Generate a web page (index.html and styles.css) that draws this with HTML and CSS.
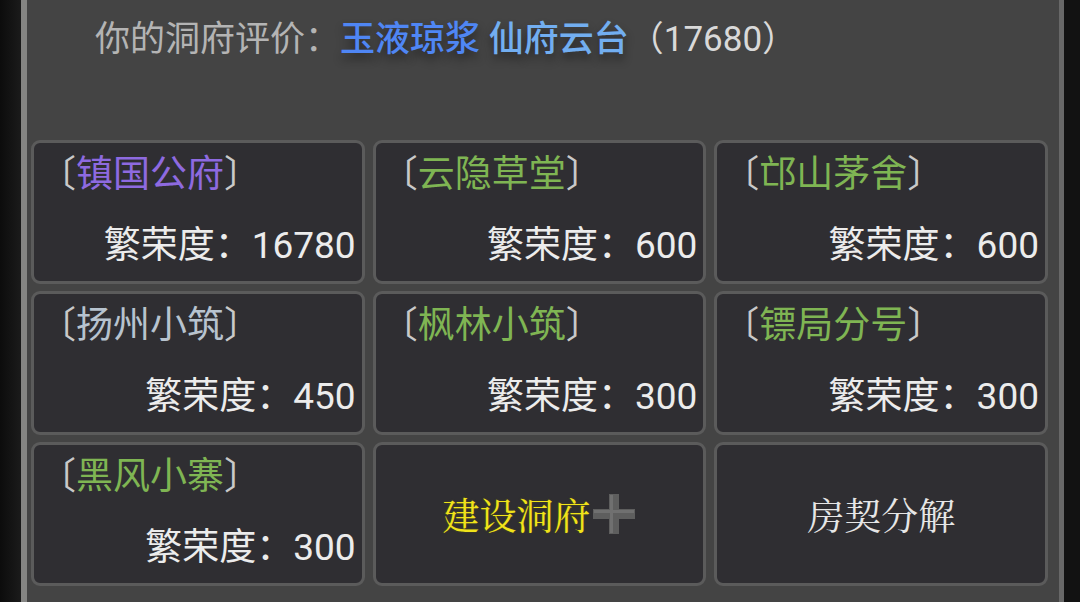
FILE: index.html
```html
<!DOCTYPE html>
<html lang="zh-CN">
<head>
<meta charset="utf-8">
<title>洞府</title>
<link rel="stylesheet" href="styles.css">
</head>
<body>
<div class="screen">
  <div class="panel">
    <div class="header">
      <span class="label">你的洞府评价：</span><span class="rank rank-a">玉液琼浆</span> <span class="rank rank-b">仙府云台</span><span class="score">（17680）</span>
    </div>
    <div class="grid">
      <div class="card">
        <div class="title"><span class="br">〔</span><span class="name purple">镇国公府</span><span class="br">〕</span></div>
        <div class="value">繁荣度：16780</div>
      </div>
      <div class="card">
        <div class="title"><span class="br">〔</span><span class="name green">云隐草堂</span><span class="br">〕</span></div>
        <div class="value">繁荣度：600</div>
      </div>
      <div class="card">
        <div class="title"><span class="br">〔</span><span class="name green">邙山茅舍</span><span class="br">〕</span></div>
        <div class="value">繁荣度：600</div>
      </div>
      <div class="card">
        <div class="title"><span class="br">〔</span><span class="name pale">扬州小筑</span><span class="br">〕</span></div>
        <div class="value">繁荣度：450</div>
      </div>
      <div class="card">
        <div class="title"><span class="br">〔</span><span class="name green">枫林小筑</span><span class="br">〕</span></div>
        <div class="value">繁荣度：300</div>
      </div>
      <div class="card">
        <div class="title"><span class="br">〔</span><span class="name green">镖局分号</span><span class="br">〕</span></div>
        <div class="value">繁荣度：300</div>
      </div>
      <div class="card">
        <div class="title"><span class="br">〔</span><span class="name green">黑风小寨</span><span class="br">〕</span></div>
        <div class="value">繁荣度：300</div>
      </div>
      <div class="card action">
        <span class="build">建设洞府</span><svg class="plus" width="44" height="40" viewBox="0 0 44 40"><rect x="1" y="15" width="42" height="10" fill="#5e5e5e"/><rect x="17" y="0" width="10" height="40" fill="#5e5e5e"/><rect x="2" y="16" width="40" height="3" fill="#707070"/><rect x="18" y="1" width="3" height="38" fill="#707070"/></svg>
      </div>
      <div class="card action">
        <span class="split">房契分解</span>
      </div>
    </div>
  </div>
</div>
</body>
</html>
```

FILE: styles.css
```css
html, body {
  margin: 0;
  padding: 0;
  background: #121212;
  width: 1080px;
  height: 602px;
  overflow: hidden;
}

.screen {
  display: flex;
  height: 602px;
  padding-left: 21px;
  width: 1064px;
  box-sizing: border-box;
  background: linear-gradient(to right, #0c0c0c 0, #1a1a1a 20px);
}

.panel {
  flex: 1;
  background: #444444;
  border-left: 6px solid #858583;
  border-right: 5px solid #686868;
  padding: 0 11px 0 4px;
  font-family: Roboto, "Noto Sans CJK SC", sans-serif;
  box-sizing: border-box;
}

.header {
  height: 140px;
  box-sizing: border-box;
  padding: 18px 0 0 64px;
  font-size: 35px;
  line-height: 44px;
  color: #b4b4b4;
  white-space: nowrap;
}

.rank {
  font-weight: 500;
  text-shadow: 0 6px 10px rgba(0, 0, 0, 0.45);
}

.rank-a {
  color: #4f86f4;
}

.rank-b {
  color: #72aef0;
}

.score {
  color: #d9d9d9;
}

.grid {
  display: grid;
  grid-template-columns: repeat(3, 1fr);
  grid-template-rows: repeat(3, 144px);
  gap: 7px 8px;
}

.card {
  background: #2f2e32;
  border: 3px solid #5b5b5b;
  border-radius: 9px;
  box-sizing: border-box;
  display: flex;
  flex-direction: column;
  justify-content: space-between;
  padding: 12px 6px 15px 5px;
}

.title, .value {
  font-size: 37px;
  line-height: 40px;
  white-space: nowrap;
}

.br {
  color: #c9c9c9;
}

.purple {
  color: #8e6ae0;
}

.green {
  color: #7fb553;
}

.pale {
  color: #b7c3cf;
}

.value {
  color: #ececec;
  text-align: right;
}

.card.action {
  flex-direction: row;
  align-items: center;
  justify-content: center;
  padding: 0;
}

.build, .split {
  font-family: "AR PL UKai CN", "Noto Serif CJK SC", "Noto Sans CJK SC", serif;
  font-size: 37px;
  line-height: 40px;
}

.build {
  color: #f0e31a;
  text-shadow: 0 0 2px rgba(120, 110, 0, 0.6);
}

.split {
  color: #e6e6e6;
}

.plus {
  display: block;
  margin-left: 2px;
}
```
